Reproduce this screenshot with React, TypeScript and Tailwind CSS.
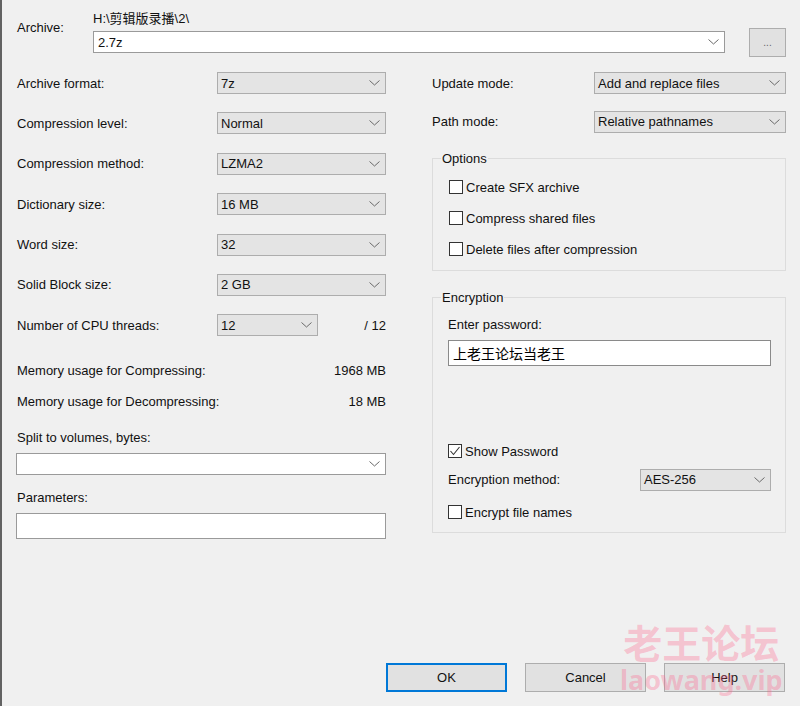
import React from "react";

const Chevron = () => (
  <svg width="11" height="6" viewBox="0 0 11 6" className="shrink-0">
    <polyline points="0.5,0.5 5.5,5 10.5,0.5" fill="none" stroke="#6a6a6a" strokeWidth="1" />
  </svg>
);

const Combo = ({ value, w, white }: { value: string; w: string; white?: boolean }) => (
  <div
    className={`${w} h-[22px] flex items-center justify-between pl-[3px] pr-[5px] border ${
      white ? "bg-white border-[#9a9a9a]" : "bg-[#e4e4e4] border-[#adadad]"
    }`}
  >
    <span className="leading-[16px] pt-[1px]">{value}</span>
    <Chevron />
  </div>
);

const Check = ({ label, checked }: { label: string; checked?: boolean }) => (
  <div className="flex items-center h-[16px]">
    <div className="w-[14px] h-[14px] border border-[#333333] bg-white flex items-center justify-center">
      {checked && (
        <svg width="12" height="12" viewBox="0 0 12 12">
          <polyline points="1.5,6 4.5,9.5 10.5,2" fill="none" stroke="#333333" strokeWidth="1.1" />
        </svg>
      )}
    </div>
    <span className="ml-[3px] leading-[16px] pt-[1px]">{label}</span>
  </div>
);

const Row = ({ label, children }: { label: string; children: React.ReactNode }) => (
  <div className="flex items-center h-[22px]">
    <span className="w-[201px] leading-[16px] pl-[1px] pt-[1px]">{label}</span>
    {children}
  </div>
);

const Btn = ({ label, primary }: { label: string; primary?: boolean }) => (
  <div
    className={`w-[121px] h-[29px] flex items-center justify-center bg-[#e1e1e1] ${
      primary ? "border-2 border-[#0078d7]" : "border border-[#adadad]"
    }`}
  >
    {label}
  </div>
);

export default function App() {
  return (
    <div
      className="relative w-[800px] h-[706px] bg-[#f0f0f0] border-l-2 border-[#626262] flex flex-col text-[13px] text-[#111111] overflow-hidden"
      style={{ fontFamily: '"Liberation Sans", Arial, "Noto Sans CJK SC", sans-serif' }}
    >
      {/* Archive */}
      <div className="flex pt-[10px] pl-[15px]">
        <span className="w-[76px] mt-[10px] leading-[16px]">Archive:</span>
        <div className="flex flex-col">
          <span className="leading-[16px] h-[16px] pt-[1px]">H:\剪辑版录播\2\</span>
          <div className="flex items-start mt-[5px]">
            <div className="w-[632px] h-[22px] bg-white border border-[#9a9a9a] flex items-center justify-between pl-[4px] pr-[5px]">
              <span className="pt-[1px]">2.7z</span>
              <Chevron />
            </div>
            <div className="ml-[24px] -mt-[3px] w-[37px] h-[29px] bg-[#e1e1e1] border border-[#adadad] flex items-center justify-center text-[10px] text-[#666666]">
              ...
            </div>
          </div>
        </div>
      </div>

      {/* Columns */}
      <div className="flex mt-[15px] pl-[14px]">
        {/* Left */}
        <div className="w-[370px] flex flex-col">
          <div className="flex flex-col gap-[18.4px]">
            <Row label="Archive format:"><Combo value="7z" w="w-[169px]" /></Row>
            <Row label="Compression level:"><Combo value="Normal" w="w-[169px]" /></Row>
            <Row label="Compression method:"><Combo value="LZMA2" w="w-[169px]" /></Row>
            <Row label="Dictionary size:"><Combo value="16 MB" w="w-[169px]" /></Row>
            <Row label="Word size:"><Combo value="32" w="w-[169px]" /></Row>
            <Row label="Solid Block size:"><Combo value="2 GB" w="w-[169px]" /></Row>
            <Row label="Number of CPU threads:">
              <Combo value="12" w="w-[101px]" />
              <span className="ml-auto pt-[1px]">/ 12</span>
            </Row>
          </div>
          <div className="flex justify-between mt-[27px] leading-[16px] pl-[1px]">
            <span>Memory usage for Compressing:</span>
            <span>1968 MB</span>
          </div>
          <div className="flex justify-between mt-[15px] leading-[16px] pl-[1px]">
            <span>Memory usage for Decompressing:</span>
            <span>18 MB</span>
          </div>
          <span className="mt-[20px] leading-[16px] pl-[1px]">Split to volumes, bytes:</span>
          <div className="mt-[7px]">
            <Combo value="" w="w-[370px]" white />
          </div>
          <span className="mt-[15px] leading-[16px] pl-[1px]">Parameters:</span>
          <div className="mt-[7px] w-[370px] h-[26px] bg-white border border-[#9a9a9a]" />
        </div>

        {/* Right */}
        <div className="w-[354px] ml-[46px] flex flex-col">
          <div className="flex items-center h-[22px]">
            <span className="w-[162px] leading-[16px] pt-[1px]">Update mode:</span>
            <Combo value="Add and replace files" w="w-[192px]" />
          </div>
          <div className="flex items-center h-[23px] mt-[16px]">
            <span className="w-[162px] leading-[16px] pt-[1px]">Path mode:</span>
            <Combo value="Relative pathnames" w="w-[192px]" />
          </div>

          <div className="relative mt-[25px] border border-[#dcdcdc] pt-[20px] pb-[13px] pl-[16px] flex flex-col gap-[15px]">
            <span className="absolute -top-[8px] left-[8px] bg-[#f0f0f0] px-[1px] leading-[16px]">Options</span>
            <Check label="Create SFX archive" />
            <Check label="Compress shared files" />
            <Check label="Delete files after compression" />
          </div>

          <div className="relative mt-[26px] border border-[#dcdcdc] pt-[18px] pb-[12px] pl-[15px] pr-[14px] flex flex-col">
            <span className="absolute -top-[8px] left-[8px] bg-[#f0f0f0] px-[1px] leading-[16px]">Encryption</span>
            <span className="leading-[16px] pt-[1px]">Enter password:</span>
            <div
              className="mt-[7px] h-[26px] bg-white border border-[#8a8a8a] flex items-center pl-[4px] text-[14px] text-black"
              style={{ fontFamily: '"Noto Sans CJK SC", sans-serif' }}
            >
              上老王论坛当老王
            </div>
            <div className="mt-[77px]">
              <Check label="Show Password" checked />
            </div>
            <div className="mt-[9px] flex items-center justify-between h-[23px]">
              <span className="leading-[16px] pt-[1px]">Encryption method:</span>
              <Combo value="AES-256" w="w-[131px]" />
            </div>
            <div className="mt-[13px]">
              <Check label="Encrypt file names" />
            </div>
          </div>
        </div>
      </div>

      {/* Buttons */}
      <div className="mt-auto flex justify-end gap-[18px] pr-[15px] pb-[14px]">
        <Btn label="OK" primary />
        <Btn label="Cancel" />
        <Btn label="Help" />
      </div>

      {/* Watermark */}
      <div className="absolute left-[618px] top-[618px] flex flex-col items-center pointer-events-none text-[rgba(255,100,140,0.32)] font-bold">
        <span
          className="text-[39px] leading-[46px]"
          style={{ fontFamily: '"Noto Sans CJK SC", sans-serif' }}
        >
          老王论坛
        </span>
        <span className="text-[27px] leading-[32px]" style={{ fontFamily: '"Noto Sans", sans-serif' }}>
          laowang.vip
        </span>
      </div>
    </div>
  );
}
